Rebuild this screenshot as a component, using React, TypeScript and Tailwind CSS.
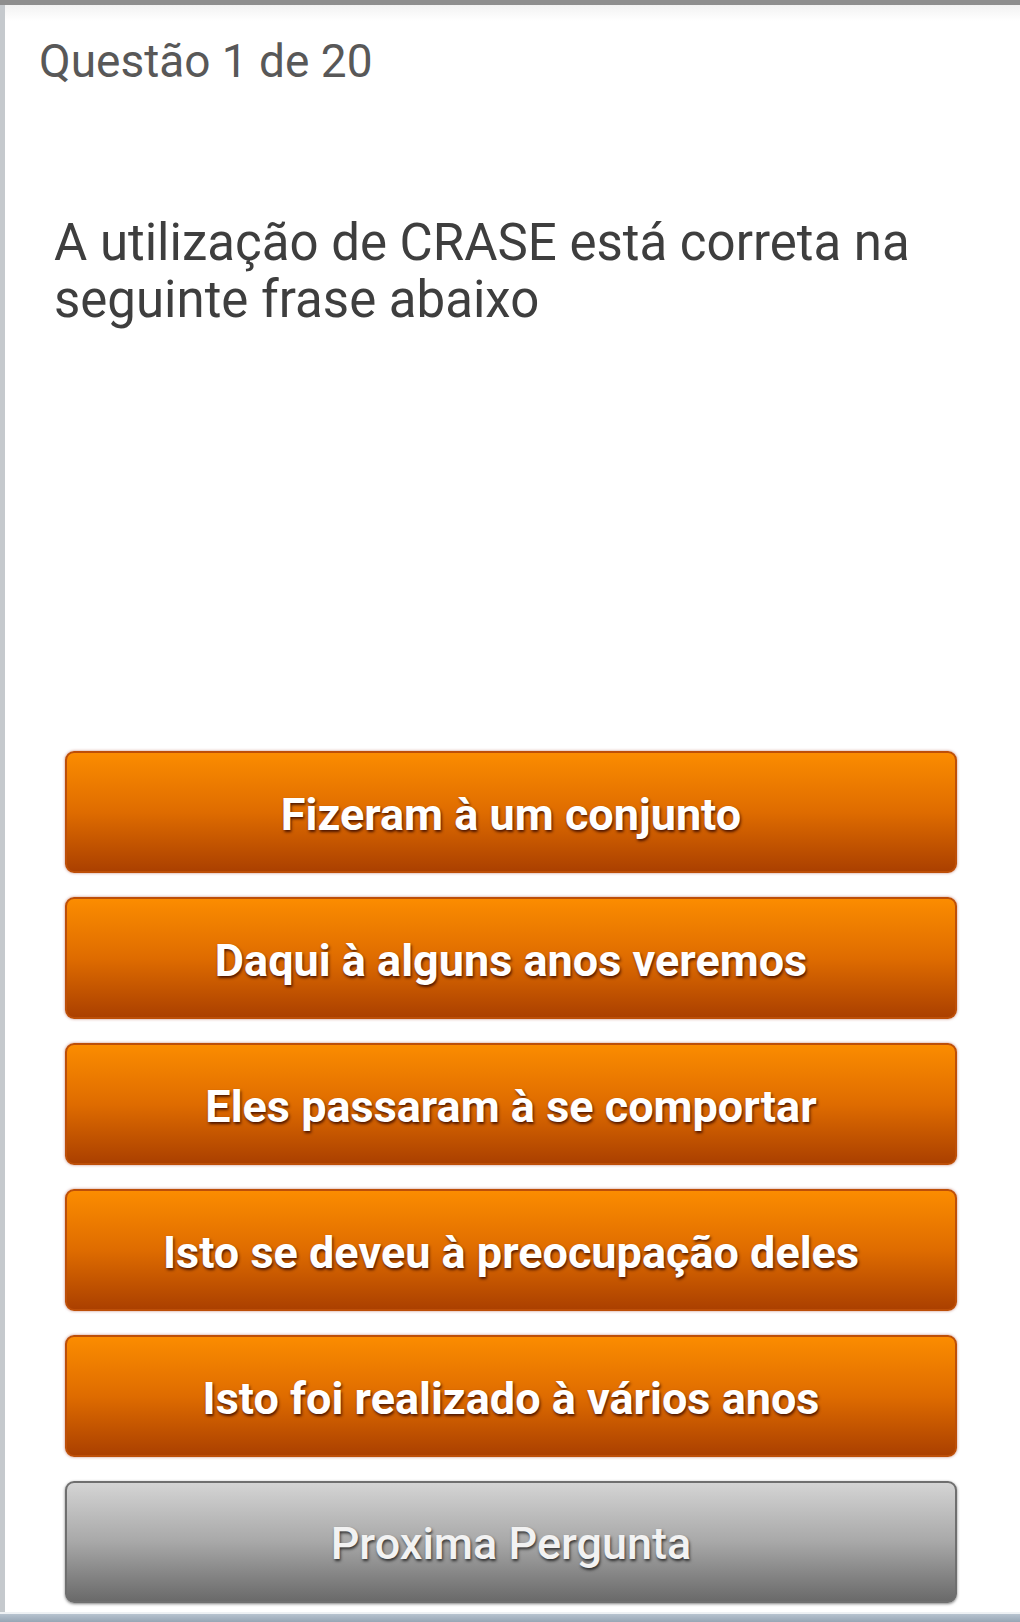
import React from "react";

const answers = [
  "Fizeram à um conjunto",
  "Daqui à alguns anos veremos",
  "Eles passaram à se comportar",
  "Isto se deveu à preocupação deles",
  "Isto foi realizado à vários anos",
];

export default function App() {
  return (
    <div
      className="w-[1020px] h-[1622px] flex flex-col bg-white overflow-hidden"
      style={{ fontFamily: "Roboto, 'Noto Sans', Arial, sans-serif" }}
    >
      <div className="h-[5px] bg-[#8e8e8e] shrink-0" />
      <div className="flex-1 flex flex-col border-l-[5px] border-[#c5c9cd] bg-linear-to-b from-[#f2f2f2] to-white to-[16px] min-h-0">
        <div className="mt-[33px] ml-[34px] text-[46px] leading-[46px] text-[#585858]">
          Questão 1 de 20
        </div>
        <div className="mt-[130px] ml-[49px] mr-[40px] text-[51px] leading-[57px] text-[#3e3e3e]">
          A utilização de CRASE está correta na seguinte frase abaixo
        </div>
        <div className="mt-auto mb-[9px] ml-[60px] mr-[63px] flex flex-col gap-[24px]">
          {answers.map((a) => (
            <button
              key={a}
              className="h-[122px] w-full pt-[5px] rounded-[9px] border-[2px] border-[#bd4f08] bg-linear-to-b from-[#fb8c00] via-[#df6c00] to-[#ab4000] shadow-[0_0_3px_rgba(150,40,20,0.55)] text-white font-bold text-[45px] [text-shadow:1px_2px_3px_rgba(40,0,0,0.8)]"
            >
              {a}
            </button>
          ))}
          <button className="h-[122px] w-full pt-[4px] rounded-[9px] border-[2px] border-[#6f6f6f] bg-linear-to-b from-[#d4d4d4] via-[#a8a8a8] to-[#6a6a6a] shadow-[0_1px_3px_rgba(0,0,0,0.5)] text-[#f2f2f2] font-medium text-[45px] [text-shadow:1px_2px_3px_rgba(0,0,0,0.7)]">
            Proxima Pergunta
          </button>
        </div>
      </div>
      <div className="h-[2px] bg-[#eef1f4] shrink-0" />
      <div className="h-[8px] bg-linear-to-b from-[#b7c3cf] to-[#97a6b5] shrink-0" />
    </div>
  );
}
